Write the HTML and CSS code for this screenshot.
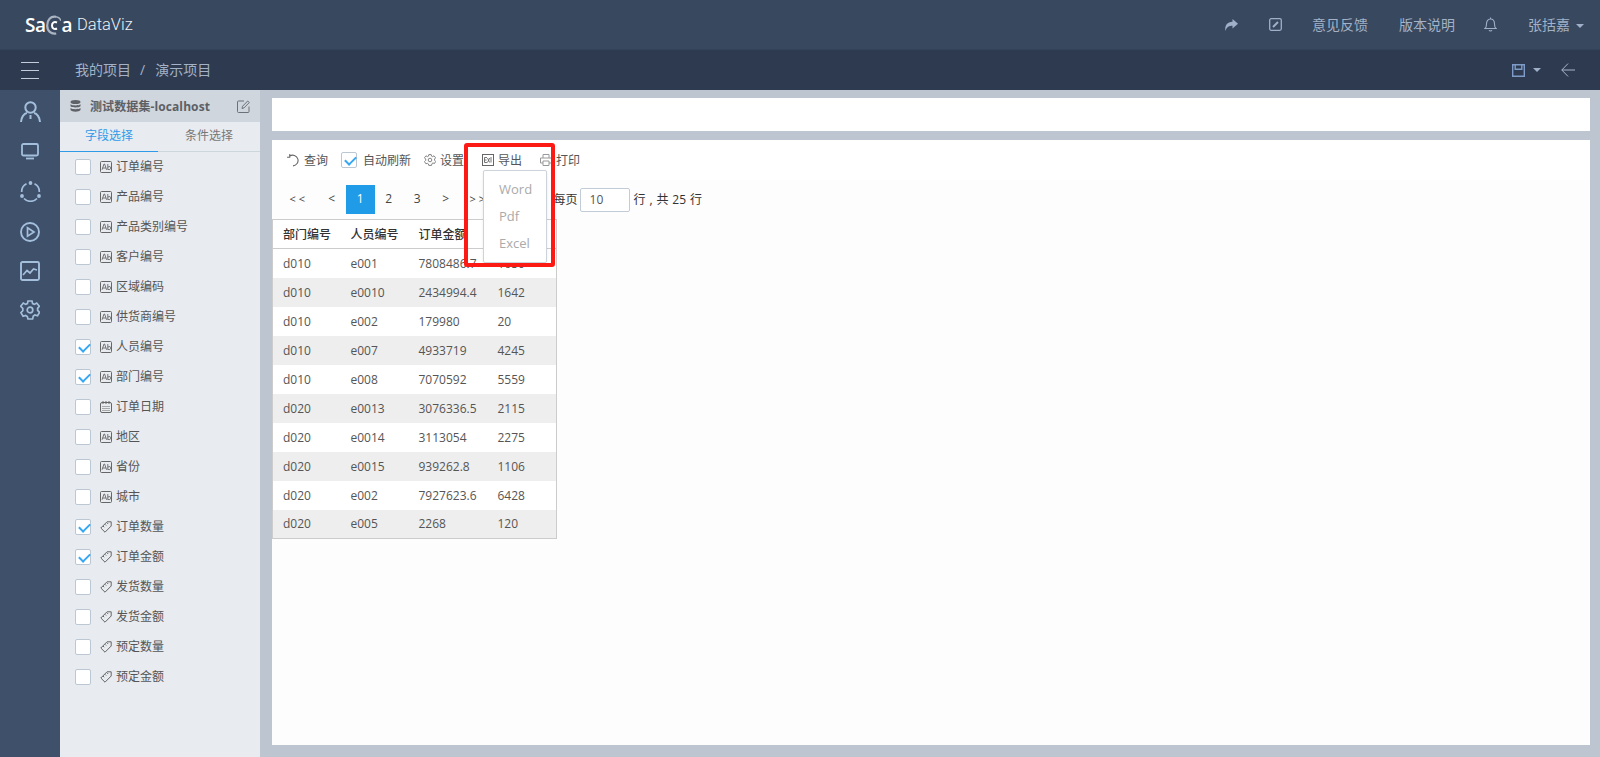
FILE: index.html
```html
<!DOCTYPE html>
<html lang="zh-CN">
<head>
  <meta charset="UTF-8">
  <title>Saga DataViz</title>
  <link rel="stylesheet" href="styles.css">
</head>
<body>
  <svg class="sprite" width="0" height="0">
    <symbol id="i-text" viewBox="0 0 12 12">
      <rect x="0.5" y="0.5" width="11" height="11" rx="1" fill="none" stroke="currentColor"/>
      <path d="M2 8.800L4 3h.6l2 5.800M2.800 7h3M7.800 3v5.800M7.800 6.200c1.800-1.200 3-.6 3 .8s-1.400 2.200-3 1.200" fill="none" stroke="currentColor" stroke-width=".9"/>
    </symbol>
    <symbol id="i-date" viewBox="0 0 12 12">
      <rect x="0.5" y="1.5" width="11" height="10" rx="1.5" fill="none" stroke="currentColor"/>
      <path d="M3 0v3M6 0v3M9 0v3M2.500 5.500h7M2.500 7.500h7M2.500 9.500h7" stroke="currentColor" stroke-dasharray="1 1" fill="none"/>
    </symbol>
    <symbol id="i-num" viewBox="0 0 12 12">
      <path d="M0.800 7L7 0.800h4.200V5L5 11.200z M3 5l1.200 1.200M5 3.300l1.200 1.200M7 1.800l1.200 1.200" fill="none" stroke="currentColor"/>
    </symbol>
  </svg>

  <header class="topbar">
    <div class="logo">
      <span class="logo-sa">Sa</span>
      <svg class="logo-ring" width="15" height="20" viewBox="0 0 15 20"><path d="M10 1.800C4.500.8 1.200 5 1.200 10.500s3.800 9 9 8" fill="none" stroke="#aab4c2" stroke-width="2.200"/><path d="M10 1.800c3 .5 4.500 2 4.800 4" fill="none" stroke="#aab4c2" stroke-width="1.500"/><path d="M11 7.500c-3-1.500-5 .5-5 3s2 4.500 5 3" fill="none" stroke="#fff" stroke-width="2"/></svg>
      <span class="logo-sa">a</span>
      <span class="logo-name">DataViz</span>
    </div>
    <nav class="topnav">
      <svg class="nav-share" width="14" height="12" viewBox="0 0 14 12"><path d="M8.500 0L14 4.800 8.500 9.500V6.800C5 6.800 2.800 7.800 1.500 12 .3 6.500 3.500 3 8.500 2.800z" fill="#9fb0c8"/></svg>
      <svg class="nav-edit" width="13" height="13" viewBox="0 0 13 13"><rect x="0.700" y="0.700" width="11.600" height="11.600" rx="1.500" fill="none" stroke="#9fb0c8" stroke-width="1.300"/><path d="M4 9l5-5" stroke="#9fb0c8" stroke-width="2"/></svg>
      <a class="nav-link">意见反馈</a>
      <a class="nav-link">版本说明</a>
      <svg class="nav-bell" width="13" height="15" viewBox="0 0 13 15"><path d="M1 11.500c1.200-1 1.500-2 1.500-4.500C2.500 4 4 2 6.500 2s4 2 4 5c0 2.500.3 3.500 1.500 4.500z M5 13.200c.6 1 2.400 1 3 0M6.500 0.500V2" fill="none" stroke="#9fb0c8" stroke-width="1.100"/></svg>
      <a class="nav-user">张括嘉<i class="caret"></i></a>
    </nav>
  </header>

  <div class="subbar">
    <div class="burger"><i></i><i></i><i></i></div>
    <div class="crumbs"><span>我的项目</span><span class="crumb-sep">/</span><span>演示项目</span></div>
    <div class="subbar-right">
      <svg width="13" height="13" viewBox="0 0 13 13"><path d="M.7.700h11.600v11.600H.7z M3.200 .7v4.600h6.600V.7" fill="none" stroke="#7f9cc8" stroke-width="1.400"/></svg>
      <i class="caret"></i>
      <svg class="back" width="14" height="14" viewBox="0 0 14 14"><path d="M7 .6L.8 7 7 13.400M.8 7H14" fill="none" stroke="#a9b6c8" stroke-width="1"/></svg>
    </div>
  </div>

  <div class="content">
    <aside class="rail">
      <svg width="21" height="22" viewBox="0 0 21 22"><circle cx="10.500" cy="6.500" r="5.200" fill="none" stroke="#a4bfdc" stroke-width="2"/><path d="M1 21c.3-5 3-8.500 6-9M20 21c-.3-5-3-8.500-6-9M10.500 14v4" fill="none" stroke="#a4bfdc" stroke-width="2"/></svg>
      <svg width="18" height="17" viewBox="0 0 18 17"><rect x="1" y="1" width="16" height="11.500" rx="1.500" fill="none" stroke="#a4bfdc" stroke-width="1.800"/><path d="M5 15.500h8" stroke="#a4bfdc" stroke-width="1.800"/></svg>
      <svg class="rail-share" width="21" height="21" viewBox="0 0 21 21"><path d="M6.500 2.800A8.800 8.800 0 0 0 1.700 11M14.500 2.800A8.800 8.800 0 0 1 19.300 11M4 17.500a9 9 0 0 0 13 0" fill="none" stroke="#a4bfdc" stroke-width="1.700"/><circle cx="10.500" cy="2" r="1.900" fill="#a4bfdc"/><circle cx="2" cy="15" r="1.900" fill="#a4bfdc"/><circle cx="19" cy="15" r="1.900" fill="#a4bfdc"/></svg>
      <svg width="20" height="20" viewBox="0 0 20 20"><circle cx="10" cy="10" r="9" fill="none" stroke="#a4bfdc" stroke-width="1.900"/><path d="M7.500 5.800L14 10l-6.500 4.200z" fill="none" stroke="#a4bfdc" stroke-width="1.700"/></svg>
      <svg width="20" height="20" viewBox="0 0 20 20"><rect x="1" y="1" width="18" height="18" rx="1.500" fill="none" stroke="#a4bfdc" stroke-width="1.900"/><path d="M3 14l4-4.500 3 2.500 3.500-4 3.500 1" fill="none" stroke="#a4bfdc" stroke-width="1.700"/></svg>
      <svg class="rail-gear" width="20" height="20" viewBox="0 0 20 20"><path d="M8 1h4l.6 2.600 1.800.8L16.700 3l2.600 3.300-1.700 2.100v1.900l1.900 2-2 3.500-2.600-.8-1.600 1L12.600 19H8l-.7-2.500-1.700-1-2.500.8-2.200-3.600 1.900-2V8.400L.7 6.300 3.300 3l2.300 1.400 1.800-.8z" fill="none" stroke="#a4bfdc" stroke-width="1.700"/><circle cx="10" cy="10" r="2.800" fill="none" stroke="#a4bfdc" stroke-width="1.700"/></svg>
    </aside>

    <aside class="fields">
      <div class="fields-head">
        <svg width="11" height="12" viewBox="0 0 11 12"><ellipse cx="5.500" cy="2" rx="5" ry="2" fill="#5f6368"/><path d="M.5 4.200c1.500 1.600 8.500 1.600 10 0v2c-1.500 1.600-8.500 1.600-10 0zM.5 8c1.500 1.600 8.500 1.600 10 0v2c-1.500 2.200-8.500 2.200-10 0z" fill="#5f6368"/></svg>
        <span class="fields-title">测试数据集-localhost</span>
        <svg class="fields-edit" width="13" height="13" viewBox="0 0 13 13"><path d="M7 1H1.500a1 1 0 0 0-1 1v9.500a1 1 0 0 0 1 1H11a1 1 0 0 0 1-1V6.500M5 8.500l.5-2.200L10.700 1l1.600 1.500L7 7.900z" fill="none" stroke="#6c7177"/></svg>
      </div>
      <div class="tabs">
        <div class="tab tab-active">字段选择</div>
        <div class="tab">条件选择</div>
      </div>
      <ul class="field-list">
        <li><span class="check"></span><svg class="ficon"><use href="#i-text"/></svg><span class="fname">订单编号</span></li>
        <li><span class="check"></span><svg class="ficon"><use href="#i-text"/></svg><span class="fname">产品编号</span></li>
        <li><span class="check"></span><svg class="ficon"><use href="#i-text"/></svg><span class="fname">产品类别编号</span></li>
        <li><span class="check"></span><svg class="ficon"><use href="#i-text"/></svg><span class="fname">客户编号</span></li>
        <li><span class="check"></span><svg class="ficon"><use href="#i-text"/></svg><span class="fname">区域编码</span></li>
        <li><span class="check"></span><svg class="ficon"><use href="#i-text"/></svg><span class="fname">供货商编号</span></li>
        <li><span class="check checked"></span><svg class="ficon"><use href="#i-text"/></svg><span class="fname">人员编号</span></li>
        <li><span class="check checked"></span><svg class="ficon"><use href="#i-text"/></svg><span class="fname">部门编号</span></li>
        <li><span class="check"></span><svg class="ficon"><use href="#i-date"/></svg><span class="fname">订单日期</span></li>
        <li><span class="check"></span><svg class="ficon"><use href="#i-text"/></svg><span class="fname">地区</span></li>
        <li><span class="check"></span><svg class="ficon"><use href="#i-text"/></svg><span class="fname">省份</span></li>
        <li><span class="check"></span><svg class="ficon"><use href="#i-text"/></svg><span class="fname">城市</span></li>
        <li><span class="check checked"></span><svg class="ficon"><use href="#i-num"/></svg><span class="fname">订单数量</span></li>
        <li><span class="check checked"></span><svg class="ficon"><use href="#i-num"/></svg><span class="fname">订单金额</span></li>
        <li><span class="check"></span><svg class="ficon"><use href="#i-num"/></svg><span class="fname">发货数量</span></li>
        <li><span class="check"></span><svg class="ficon"><use href="#i-num"/></svg><span class="fname">发货金额</span></li>
        <li><span class="check"></span><svg class="ficon"><use href="#i-num"/></svg><span class="fname">预定数量</span></li>
        <li><span class="check"></span><svg class="ficon"><use href="#i-num"/></svg><span class="fname">预定金额</span></li>
      </ul>
    </aside>

    <main class="main">
      <div class="title-box"></div>
      <section class="report">
        <div class="toolbar">
          <span class="tool tool-query">
            <svg width="14" height="13" viewBox="0 0 13 12"><path d="M3.500 1.800A5 5 0 1 1 6.500 11M3.500 0v3H1" fill="none" stroke="#666" stroke-width="1"/></svg>查询
          </span>
          <span class="tool tool-auto"><span class="check checked"></span>自动刷新</span>
          <span class="tool tool-set">
            <svg width="12" height="12" viewBox="0 0 20 20"><path d="M8 1h4l.6 2.600 1.800.8L16.700 3l2.600 3.300-1.700 2.100v1.900l1.900 2-2 3.500-2.600-.8-1.600 1L12.600 19H8l-.7-2.500-1.700-1-2.500.8-2.200-3.600 1.900-2V8.400L.7 6.300 3.300 3l2.300 1.400 1.800-.8z" fill="none" stroke="#777" stroke-width="1.500"/><circle cx="10" cy="10" r="3" fill="none" stroke="#777" stroke-width="1.500"/></svg>设置
          </span>
          <span class="tool tool-export">
            <svg width="12" height="12" viewBox="0 0 12 12"><rect x="0.500" y="0.500" width="11" height="11" fill="none" stroke="#666"/><path d="M2.500 3.500h2.500M2.500 6h2M2.500 8.500h2.500M2.500 3.500v5M5.500 4l2.200 4.500M7.700 4L5.500 8.500M9 3v5.500" fill="none" stroke="#666" stroke-width=".9"/></svg>导出
          </span>
          <span class="tool tool-print">
            <svg width="12" height="12" viewBox="0 0 12 12"><path d="M3 4V.5h6V4M3 9H.5V4h11v5H9M3 7h6v4.500H3z" fill="none" stroke="#999"/></svg>打印
          </span>
        </div>

        <div class="pager">
          <a class="page page-first">&lt; &lt;</a>
          <a class="page">&lt;</a>
          <a class="page page-on">1</a>
          <a class="page">2</a>
          <a class="page">3</a>
          <a class="page">&gt;</a>
          <a class="page page-last">&gt; &gt;</a>
          <span class="page-size">每页</span>
          <input class="page-input" type="text" value="10">
          <span class="page-total">行 , 共 25 行</span>
        </div>

        <table class="grid">
          <colgroup><col class="c1"><col class="c2"><col class="c3"><col class="c4"><col></colgroup>
          <thead>
            <tr><th>部门编号</th><th>人员编号</th><th>订单金额</th><th>订单数量</th><th></th></tr>
          </thead>
          <tbody>
            <tr><td>d010</td><td>e001</td><td>7808486.7</td><td>1650</td><td></td></tr>
            <tr><td>d010</td><td>e0010</td><td>2434994.4</td><td>1642</td><td></td></tr>
            <tr><td>d010</td><td>e002</td><td>179980</td><td>20</td><td></td></tr>
            <tr><td>d010</td><td>e007</td><td>4933719</td><td>4245</td><td></td></tr>
            <tr><td>d010</td><td>e008</td><td>7070592</td><td>5559</td><td></td></tr>
            <tr><td>d020</td><td>e0013</td><td>3076336.5</td><td>2115</td><td></td></tr>
            <tr><td>d020</td><td>e0014</td><td>3113054</td><td>2275</td><td></td></tr>
            <tr><td>d020</td><td>e0015</td><td>939262.8</td><td>1106</td><td></td></tr>
            <tr><td>d020</td><td>e002</td><td>7927623.6</td><td>6428</td><td></td></tr>
            <tr><td>d020</td><td>e005</td><td>2268</td><td>120</td><td></td></tr>
          </tbody>
        </table>

        <ul class="export-menu">
          <li>Word</li>
          <li>Pdf</li>
          <li>Excel</li>
        </ul>
        <div class="callout"></div>
      </section>
    </main>
  </div>
</body>
</html>
```

FILE: styles.css
```css
* {
  box-sizing: border-box;
}
html, body {
  margin: 0;
  height: 100%;
  overflow: hidden;
}
body {
  display: flex;
  flex-direction: column;
  font-family: "Open Sans", "Noto Sans CJK SC", sans-serif;
  font-size: 12px;
  color: #555;
  background-color: #bdc6d0;
}
ul {
  list-style: none;
  margin: 0;
  padding: 0;
}
.sprite {
  position: absolute;
}
.caret {
  display: inline-block;
  width: 0;
  height: 0;
  border-left: 4px solid transparent;
  border-right: 4px solid transparent;
  border-top: 4px solid #9fb0c8;
}

/* top bar */
.topbar {
  height: 50px;
  flex: none;
  display: flex;
  align-items: center;
  padding-left: 25px;
  background-color: #37485f;
  border-bottom: 1px solid #334259;
}
.logo {
  display: flex;
  align-items: center;
  color: #fff;
}
.logo-sa {
  font-size: 19px;
  font-weight: 600;
  letter-spacing: -0.5px;
}
.logo-ring {
  margin: 0 0 0 1px;
}
.logo-name {
  margin-left: 5px;
  font-size: 16.500px;
  font-weight: 300;
  font-family: Roboto, sans-serif;
  color: #eef1f5;
}
.topnav {
  margin-left: auto;
  display: flex;
  align-items: center;
  color: #a3b2c7;
  font-size: 14px;
}
.nav-edit {
  margin-left: 31px;
}
.nav-link {
  margin-left: 30px;
  padding-bottom: 2px;
}
.nav-link + .nav-link {
  margin-left: 31px;
}
.nav-bell {
  margin-left: 29px;
}
.nav-user {
  margin: 0 16px 0 31px;
  padding-bottom: 2px;
}
.nav-user .caret {
  margin-left: 6px;
  vertical-align: middle;
}

/* second bar */
.subbar {
  height: 40px;
  flex: none;
  display: flex;
  align-items: center;
  background-color: #2d3a50;
  color: #a3b2c7;
  font-size: 14px;
}
.burger {
  width: 60px;
  padding-left: 21px;
}
.burger i {
  display: block;
  width: 18px;
  height: 1px;
  margin-bottom: 7px;
  background-color: #c3ccd8;
}
.burger i:last-child {
  margin-bottom: 0;
}
.crumbs {
  margin-left: 15px;
  padding-bottom: 2px;
}
.crumb-sep {
  margin: 0 10px 0 9px;
}
.subbar-right {
  margin-left: auto;
  padding-right: 25px;
  display: flex;
  align-items: center;
}
.subbar-right .caret {
  margin-left: 8px;
}
.back {
  margin-left: 20px;
}

/* body */
.content {
  flex: 1;
  display: flex;
  min-height: 0;
}
.rail {
  width: 60px;
  flex: none;
  display: flex;
  flex-direction: column;
  align-items: center;
  gap: 19.500px;
  padding-top: 11px;
  background-color: #3f506b;
}
.rail-share {
  margin-top: 2px;
}
.rail-gear {
  margin-top: -1px;
}
.fields {
  width: 200px;
  flex: none;
  background-color: #e8ebf0;
  color: #555;
}
.fields-head {
  height: 32px;
  display: flex;
  align-items: center;
  padding: 0 10px;
  background-color: #d0d6dd;
}
.fields-title {
  margin-left: 9px;
  font-weight: 700;
  letter-spacing: 0.100px;
  color: #5c6065;
}
.fields-edit {
  margin-left: auto;
}
.tabs {
  display: flex;
  height: 30px;
  border-bottom: 1px solid #cdd5dd;
}
.tab {
  flex: 1;
  margin-bottom: -1px;
  line-height: 28px;
  text-align: center;
  color: #777;
}
.tab-active {
  flex: 0 0 98px;
  color: #2f9be8;
  border-bottom: 1px solid #2f9be8;
}
.field-list li {
  height: 30px;
  display: flex;
  align-items: center;
  padding-left: 15px;
}
.fname {
  margin-bottom: 2px;
}
.check {
  display: inline-block;
  position: relative;
  flex: none;
  width: 16px;
  height: 16px;
  background-color: #fff;
  border: 1px solid #bcc7d4;
  border-radius: 2px;
}
.check.checked::after {
  content: "";
  position: absolute;
  left: 2.500px;
  top: 2.500px;
  width: 9px;
  height: 5px;
  border-left: 2.500px solid #35a7f5;
  border-bottom: 2.500px solid #35a7f5;
  transform: rotate(-45deg);
}
.ficon {
  width: 12px;
  height: 12px;
  margin: 0 4px 0 9px;
  color: #666;
}

/* report area */
.main {
  flex: 1;
  display: flex;
  flex-direction: column;
  gap: 9px;
  padding: 8px 10px 12px 12px;
  min-width: 0;
}
.title-box {
  height: 33px;
  flex: none;
  background-color: #fff;
}
.report {
  flex: 1;
  position: relative;
  background-color: #fdfdfd;
}
.toolbar {
  height: 40px;
  display: flex;
  align-items: center;
  background-color: #fff;
  color: #555;
}
.tool {
  display: flex;
  align-items: center;
}
.tool svg {
  margin-right: 4px;
}
.tool-query {
  margin-left: 14px;
  margin-right: 13px;
}
.tool-auto {
  margin-right: 13px;
}
.tool-auto .check {
  margin-right: 6px;
}
.tool-set {
  margin-right: 18px;
}
.tool-export {
  margin-right: 18px;
}
.pager {
  height: 29px;
  margin-top: 5px;
  padding-left: 11px;
  display: flex;
  align-items: center;
  color: #444;
}
.page {
  width: 28.500px;
  height: 29px;
  line-height: 27px;
  text-align: center;
}
.page-first, .page-last {
  width: 34.500px;
  font-size: 11px;
}
.page-first {
  padding-right: 6px;
}
.page-on {
  background-color: #1f9be8;
  color: #fff;
}
.page-size {
  margin: 0 0 2px 59px;
  color: #333;
}
.page-input {
  width: 50px;
  height: 24px;
  margin: 0 4px 0 2px;
  padding: 0 9px;
  border: 1px solid #c2ccd8;
  border-radius: 2px;
  font: inherit;
  color: #555;
}
.page-total {
  margin-bottom: 2px;
  word-spacing: 0.800px;
  color: #333;
}
.grid {
  width: 285px;
  margin: 5px 0 0;
  border-collapse: collapse;
  table-layout: fixed;
  border: 1px solid #ccc;
  background-color: #fff;
}
.c1, .c2 {
  width: 68px;
}
.c3 {
  width: 79px;
}
.c4 {
  width: 59px;
}
.grid th, .grid td {
  height: 29px;
  padding: 0 0 0 10px;
  text-align: left;
  white-space: nowrap;
}
.grid th {
  font-weight: 500;
  color: #333;
  border-bottom: 1px solid #ccc;
}
.grid tbody tr:nth-child(even) {
  background-color: #eee;
}
.export-menu {
  position: absolute;
  left: 211px;
  top: 30px;
  width: 64px;
  height: 93px;
  padding-top: 6px;
  background-color: #fff;
  border: 1px solid #ccd3db;
  border-radius: 2px;
  box-shadow: 0 1px 3px rgba(0, 0, 0, 0.08);
  color: #aaa;
  font-size: 13px;
}
.export-menu li {
  height: 27px;
  line-height: 25px;
  padding-left: 15px;
}
.callout {
  position: absolute;
  left: 192px;
  top: 3px;
  width: 91px;
  height: 124px;
  border: 4px solid #fb1a14;
  border-radius: 3px;
}
```
